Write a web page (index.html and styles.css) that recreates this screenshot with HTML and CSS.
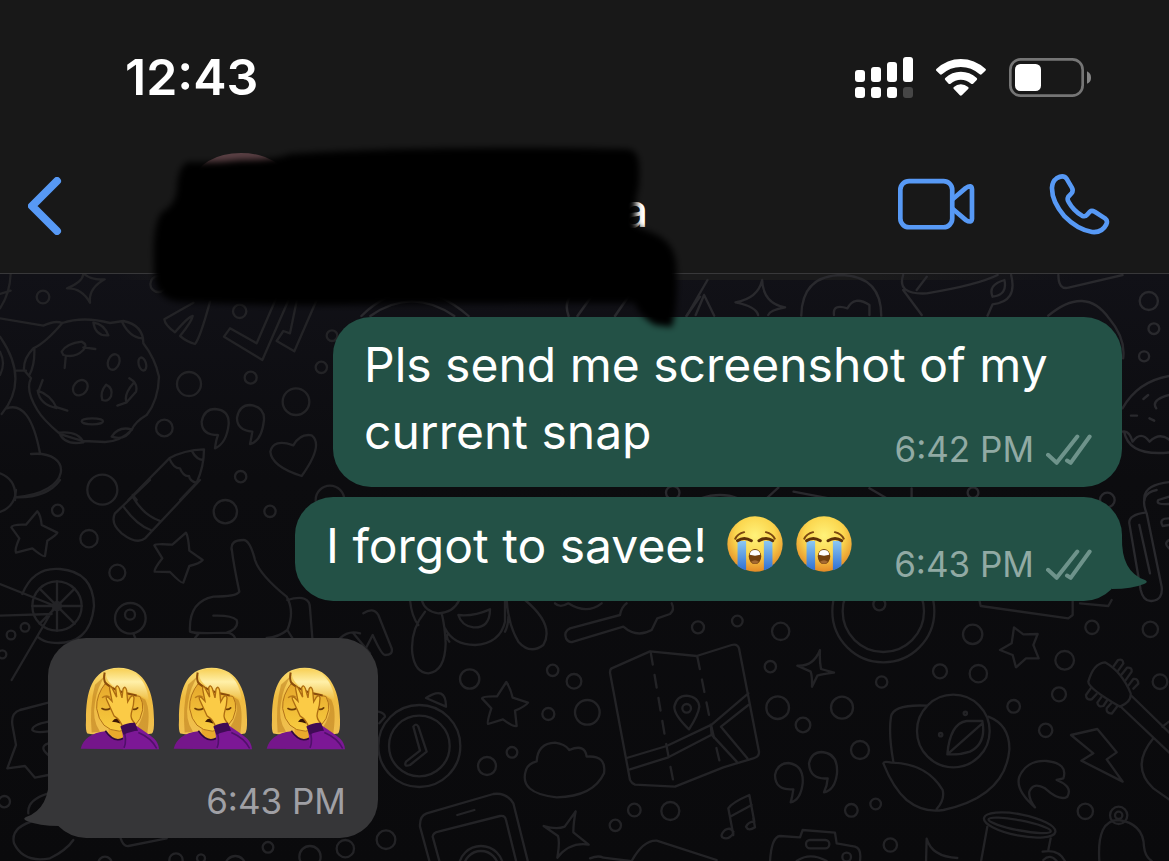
FILE: index.html
```html
<!DOCTYPE html>
<html lang="en">
<head>
<meta charset="utf-8">
<meta name="viewport" content="width=device-width, initial-scale=1">
<title>Chat</title>
<link rel="stylesheet" href="styles.css">
</head>
<body>
<svg class="defs" aria-hidden="true">
  <defs>
    <radialGradient id="face" cx=".5" cy=".35" r=".65"><stop offset="0" stop-color="#fff27a"/><stop offset=".55" stop-color="#fbd64e"/><stop offset="1" stop-color="#e48a26"/></radialGradient>
    <linearGradient id="tear" x1="0" y1="0" x2="0" y2="1"><stop offset="0" stop-color="#8cc8f2"/><stop offset="1" stop-color="#2f70d2"/></linearGradient>
    <linearGradient id="hair" x1="0" y1="0" x2="0" y2="1"><stop offset="0" stop-color="#fbdc70"/><stop offset=".45" stop-color="#efbb40"/><stop offset="1" stop-color="#f0c050"/></linearGradient>
    <linearGradient id="shine" x1="0" y1="0" x2="0" y2="1"><stop offset="0" stop-color="#f7cf55"/><stop offset=".4" stop-color="#fff0a8"/><stop offset="1" stop-color="#edb93c"/></linearGradient>
    <linearGradient id="skin" x1="0" y1="0" x2="0" y2="1"><stop offset="0" stop-color="#e5a62b"/><stop offset="1" stop-color="#f9cd40"/></linearGradient>
    <symbol id="sob" viewBox="77 81 170 170">
      <circle cx="162" cy="166" r="84" fill="url(#face)"/>
      <path d="M109 157h26v89q-14-4-26-13zM189 157h26v76q-12 9-26 13z" fill="url(#tear)"/>
      <path d="M102 150q7-15 27-20M222 150q-7-15-27-20" fill="none" stroke="#7a4712" stroke-width="6" stroke-linecap="round"/>
      <path d="M109 156q20-14 42 0M174 156q22-14 42 0" fill="none" stroke="#5e3208" stroke-width="9" stroke-linecap="round"/>
      <ellipse cx="162" cy="204" rx="19" ry="23" fill="#75420f"/>
      <path d="M146 199q1-15 16-15t16 15q-16 5-32 0z" fill="#fff"/>
      <path d="M150 220q12-10 24 0-12 12-24 0z" fill="#a56a32"/>
    </symbol>
    <symbol id="facepalm" viewBox="240 112 240 248">
      <path d="M262 311Q256 304 258 270C258 190 274 114 356 114C440 114 462 195 462 270Q463 305 456 311Q410 320 360 311Q310 320 262 311z" fill="url(#hair)"/>
      <path d="M318 135Q292 170 285 218Q275 270 300 306L275 308Q268 230 285 165zM410 195Q430 210 432 240Q425 280 400 306L442 310Q452 240 436 210z" fill="#b06f14" opacity=".45"/>
      <path d="M326 285h64v40q-30 22-64-4z" fill="#e9a92c"/>
      <path d="M318 158Q288 195 290 236Q300 302 358 304Q418 300 428 240Q430 218 420 200Q350 190 318 158z" fill="url(#skin)" stroke="#b3731a" stroke-width="3"/>
      <path d="M317 126Q318 166 370 186Q425 190 447 216Q440 145 390 122Q350 108 317 126z" fill="url(#shine)"/>
      <path d="M314 128Q309 151 318 162Q345 186 410 197" fill="none" stroke="#8a4d0c" stroke-width="6"/>
      <path d="M242 357Q252 312 316 304Q345 344 375 322L376 358z" fill="#75168b"/>
      <path d="M316 303Q342 341 370 325" fill="none" stroke="#30083f" stroke-width="5"/>
      <path d="M306 236q12 7 26-1M395 237q10 5 18-3" fill="none" stroke="#6b3c08" stroke-width="5" stroke-linecap="round"/>
      <path d="M306 204q12-10 23-2" fill="none" stroke="#b97a1a" stroke-width="4"/>
      <path d="M336 276q12-18 27-3l-3 8q-12-5-24-5z" fill="#3b1805"/>
      <path d="M342 258L320 210Q315 196 326 204L336 214L329 178Q328 165 336 174L350 202L347 174Q352 161 358 176L366 204L369 178Q376 165 380 182L383 216L391 202Q401 192 402 205Q402 225 394 250Q390 266 404 280L368 293Q362 270 342 258z" fill="#fbcb46" stroke="#ad6c12" stroke-width="4"/>
      <path d="M370 358Q372 330 366 298L404 285Q445 312 462 326Q476 340 477 358z" fill="#7c1896"/>
      <path d="M372 354Q382 330 370 300M415 308Q455 325 470 356" fill="none" stroke="#50106a" stroke-width="5"/>
      <path d="M361 290Q384 277 405 279L414 303Q395 304 370 315z" fill="#3f0b55"/>
    </symbol>
    <symbol id="ticks" viewBox="1039 173 138 92">
      <path d="M1045 235l26 24 62-79M1102 252l11 7 57-79" fill="none" stroke="currentColor" stroke-width="12" stroke-linecap="round" stroke-linejoin="round"/>
    </symbol>
    <filter id="soft" x="-5%" y="-10%" width="110%" height="120%"><feGaussianBlur stdDeviation="3"/></filter>
  </defs>
</svg>

<header class="header">
  <div class="status">
    <time class="clock">12:43</time>
    <div class="indicators">
      <svg class="signal" viewBox="78 51 174 123" role="img" aria-label="Signal"><g fill="#fff"><rect x="78" y="90" width="30" height="36" rx="9"/><rect x="126" y="81" width="30" height="45" rx="9"/><rect x="174" y="66" width="30" height="60" rx="9"/><rect x="222" y="51" width="30" height="75" rx="9"/><rect x="78" y="141" width="30" height="33" rx="9"/><rect x="126" y="141" width="30" height="33" rx="9"/><rect x="174" y="141" width="30" height="33" rx="9"/></g><rect x="222" y="141" width="30" height="33" rx="9" fill="#464646"/></svg>
      <svg class="wifi" viewBox="319 57 151 111" role="img" aria-label="Wi-Fi"><g fill="#fff"><path d="M320 87Q353 57 394 57T469 87Q471 90 468 92L457 103Q454 105 451 103Q426 81 394 81T337 103Q334 105 331 103L320 92Q318 90 320 87z"/><path d="M347 114Q367 95 394 95T442 114Q445 117 442 120L431 131Q428 133 425 131Q411 119 394 119T363 131Q360 133 357 131L347 120Q344 117 347 114z"/><path d="M373 141Q382 133 394 133T416 141Q419 144 416 147L397 166Q394 169 391 166L373 147Q370 144 373 141z"/></g></svg>
      <svg class="battery" viewBox="537 54 246 117" role="img" aria-label="Battery"><rect x="541" y="58" width="217" height="109" rx="31" fill="none" stroke="#757575" stroke-width="8"/><rect x="555" y="72" width="78" height="81" rx="16" fill="#fff"/><path d="M771 94Q783 100 783 113T771 131z" fill="#858585"/></svg>
    </div>
  </div>
  <nav class="nav">
    <button class="icon-button" aria-label="Back"><svg class="back" viewBox="0 0 34 58"><path d="M29 4L4 29L29 54" fill="none" stroke="currentColor" stroke-width="8" stroke-linecap="round" stroke-linejoin="round"/></svg></button>
    <div class="contact"><span class="name">a</span></div>
    <div class="calls">
      <button class="icon-button" aria-label="Video call"><svg class="video" viewBox="205 415 230 155"><g fill="none" stroke="currentColor" stroke-width="14" stroke-linejoin="round"><rect x="212" y="424" width="155" height="138" rx="26"/><path d="M367 479L407 445Q425 433 426 448V537Q425 551 407 540L367 506"/></g></svg></button>
      <button class="icon-button" aria-label="Voice call"><svg class="phone" viewBox="658 400 184 184"><path d="M681 413Q701 401 711 414L727 441Q732 451 726 458L716 469Q712 476 717 484Q732 511 758 526Q767 530 773 523L781 514Q787 509 796 514L827 534Q836 541 831 552Q818 578 788 575Q744 568 705 528Q666 483 667 441Q668 422 681 413z" fill="none" stroke="currentColor" stroke-width="14" stroke-linejoin="round"/></svg></button>
    </div>
  </nav>
  <svg class="scribble" viewBox="0 0 700 340" aria-hidden="true">
    <ellipse cx="241" cy="180" rx="46" ry="27" fill="#5a4044"/>
    <path filter="url(#soft)" d="M188 162Q178 166 177 188Q176 205 162 212Q152 225 154 265Q152 300 180 302Q300 307 390 304L634 303Q642 318 655 325L672 327Q679 300 676 262Q673 240 650 232L636 226V196Q640 190 639 165Q638 149 626 149Q430 145 290 154Q275 160 240 160Q215 163 188 162z"/>
  </svg>
</header>

<main class="chat">
  <svg class="doodles" viewBox="0 274 1169 587" preserveAspectRatio="xMinYMin slice" aria-hidden="true">
    <g transform="translate(0 270) scale(.33333)">
      <!-- cookie -->
      <path d="M0 145L130 167Q165 150 187 159Q250 138 330 159L370 153Q430 165 430 220Q465 265 477 320Q475 390 440 435Q405 455 395 480Q360 515 315 516L250 513Q200 500 178 490Q130 450 112 420Q75 360 93 325L72 300Q70 265 100 235Q135 220 187 159M103 235Q105 285 88 315M185 245Q200 220 245 215Q265 225 250 240Q225 265 190 255zM250 232l36 5M197 262l-3 32M280 158q32 4 45 38q-38 4-45-38zM366 155q22 46 60 50M113 362Q153 375 170 414Q120 405 113 362zM165 410l37 12M128 330l-12 32M388 325Q415 340 408 365L380 397Q370 375 400 340M380 397l-28 10M178 488q58-5 72 29q-58 10-72-29zM335 500q20-32 60-22q-20 35-60 22z"/>
      <ellipse cx="341" cy="276" rx="17" ry="24" transform="rotate(20 341 276)"/><ellipse cx="427" cy="282" rx="11" ry="20" transform="rotate(-15 427 282)"/><ellipse cx="241" cy="353" rx="20" ry="25" transform="rotate(40 241 353)"/><path d="M318 344q22 10 15 35-9 18-26 11-8-23 11-46z"/><ellipse cx="277" cy="454" rx="32" ry="9"/>
      <path d="M250 10Q250 35 201 55Q245 53 270 98Q265 55 314 28Q275 32 250 10zM32 10Q30 70 0 115M32 62L0 72M0 200Q90 330 5 432M50 302h28M0 245q18 35 0 70M20 415Q90 390 120 550M93 552C220 540 220 670 45 682M0 610Q52 630 45 690"/>
      <path d="M580 98L493 148Q495 165 525 187Q565 140 578 138Q575 155 540 198Q560 215 585 222Q600 205 630 95M835 70L770 220L690 175L672 200L787 270L870 80M895 70L870 190L850 183L830 213L883 244L950 90"/>
      <path d="M645 535Q648 510 654 495Q605 495 605 455Q612 417 645 417Q688 420 686 462Q680 520 645 535zM750 522Q755 500 757 485Q710 480 711 443Q718 405 750 405Q794 410 792 450Q785 515 750 522zM905 618Q815 590 811 545Q820 505 880 526Q900 490 935 496Q972 525 905 618z"/>
      <path d="M508 565Q550 540 612 538Q612 590 590 638L540 690M385 690L508 565Q520 595 540 595Q550 620 567 618Q570 635 590 638M575 542Q590 570 610 570M398 675l12 15"/>
      <circle cx="129" cy="81" r="19"/><circle cx="719" cy="124" r="20"/><circle cx="567" cy="342" r="36"/><circle cx="752" cy="323" r="18"/><circle cx="964" cy="292" r="17"/><circle cx="888" cy="395" r="40"/><circle cx="493" cy="474" r="25"/><circle cx="722" cy="620" r="17"/><circle cx="307" cy="659" r="45"/><circle cx="996" cy="197" r="16"/><circle cx="990" cy="690" r="43"/><circle cx="475" cy="42" r="24"/>
    </g>
    <g transform="translate(0 480) scale(.33333)">
      <path d="M450 0L345 100Q330 130 365 160Q410 195 435 175L600 0M398 50Q430 105 478 122M372 82Q410 135 452 150M45 52Q140 55 180 0M0 96Q45 80 48 30"/>
      <path d="M112 94Q122 105 125 135L172 158Q170 165 142 182L135 228Q130 232 97 205L48 218Q43 210 58 175L34 142Q37 132 78 134zM558 158Q565 170 568 212L608 240Q600 250 568 258L550 308Q545 312 510 276L464 275Q462 267 487 235L463 196Q465 190 517 194z"/>
      <circle cx="171" cy="378" r="74"/><circle cx="171" cy="378" r="12"/>
      <path d="M67 342Q100 260 180 267Q280 275 282 378Q270 500 155 488Q130 485 115 472M171 304V452M97 378H245M119 326L224 431M224 326L119 431M0 312L165 378L35 600M0 407L155 402"/>
      <path d="M695 210Q690 180 730 180Q750 180 765 240Q780 285 860 350Q885 395 862 450Q835 472 800 474M695 205Q700 250 718 335Q710 350 640 350Q565 365 570 455Q585 462 680 458Q718 445 710 420Q695 405 640 407M680 458Q700 460 705 474M570 455L595 462L585 474M862 360Q930 340 930 385L937 474M862 450l15 24"/>
      <circle cx="173" cy="91" r="17"/><circle cx="267" cy="176" r="26"/><circle cx="352" cy="278" r="24"/><circle cx="676" cy="95" r="35"/><circle cx="810" cy="94" r="17"/><circle cx="391" cy="415" r="46"/><circle cx="390" cy="404" r="15"/><circle cx="75" cy="442" r="13"/><circle cx="33" cy="465" r="13"/><circle cx="7" cy="523" r="12"/><path d="M400 460l8 20"/>
    </g>
    <g transform="translate(0 630) scale(.33333)">
      <path d="M145 218L60 240Q30 250 38 290L48 345L22 415L75 408L105 443L145 435M145 275Q95 285 97 300Q105 310 145 304M145 340Q115 350 145 375M145 490Q80 510 85 550M110 570Q30 590 42 640Q70 700 150 685Q200 660 220 630M362 625Q370 650 385 648L500 625M1020 25Q1045 0 1080 10M1060 10L1110 70"/>
      <circle cx="13" cy="515" r="17"/><circle cx="804" cy="652" r="16"/><circle cx="1036" cy="656" r="26"/><circle cx="528" cy="690" r="20"/><circle cx="603" cy="685" r="12"/><circle cx="706" cy="708" r="30"/><circle cx="930" cy="680" r="32"/><circle cx="315" cy="700" r="20"/>
    </g>
    <g transform="translate(370 600) scale(.33333)">
      <path d="M-20 40Q10 20 25 45L65 145Q70 165 45 165Q35 165 8 105L-15 150"/>
      <path d="M120 0Q125 50 145 75M165 35Q120 90 127 160Q135 218 175 220Q225 215 227 130Q225 80 215 40M155 0Q165 35 205 40Q250 38 268 0M225 85Q250 135 315 135Q390 130 405 65V0M238 125Q225 110 235 100M410 0Q415 75 445 125Q480 165 520 135Q555 75 465 0M405 95Q415 75 415 50M265 45Q310 50 360 28Q360 85 310 82Q275 78 265 45z"/>
      <path d="M750 45L600 85Q580 95 588 115Q597 130 610 125L760 80Q800 115 845 90L862 55L900 42Q915 30 905 10M750 45Q755 20 770 10M555 10Q570 25 595 10Q650 45 695 10"/>
      <path d="M409 246Q422 265 428 293L474 308Q465 320 435 332L440 378Q430 382 399 358L354 372Q350 368 364 325L336 295Q338 288 381 289zM617 634Q610 670 610 697L656 734Q600 725 562 773Q570 725 564 708L521 678Q560 690 584 680z"/>
      <circle cx="148" cy="438" r="123"/><circle cx="148" cy="438" r="91"/>
      <path d="M130 380Q138 368 145 380L170 455L120 495Q100 502 108 485L150 452zM168 294Q228 255 228 320zM25 335Q45 340 45 350L28 370M468 510Q475 490 500 484Q503 430 555 428Q585 432 598 450Q645 430 650 470Q710 465 702 520Q670 590 560 592Q445 580 468 510z"/>
      <path d="M180 790L150 680Q148 648 170 640L370 582Q410 577 430 610L475 790M210 790L188 710Q190 698 205 695L390 648Q405 645 408 660L440 790M262 645L313 630"/><circle cx="333" cy="805" r="67"/><circle cx="333" cy="805" r="52"/>
      <path d="M725 205L840 154L980 168L1085 135Q1102 130 1107 145L1167 455Q1168 470 1150 475L1060 502L915 560L795 554Q785 550 780 540L720 218Q720 208 725 205zM770 474L890 438L1025 374L1135 280M780 508L895 472L1025 404M1022 374L1025 404L1100 485M1053 380L1132 475M1053 380L1135 315M957 388Q912 345 913 320Q920 287 950 287Q985 290 988 320Q985 345 957 388z"/><path d="M842 156L890 440L912 555M982 170L1022 370L1050 490" stroke-dasharray="38 32"/><circle cx="950" cy="325" r="13"/>
      <path d="M1090 705L1075 625Q1085 608 1138 585L1153 665M1080 650L1145 615M1090 695Q1080 680 1065 690Q1050 705 1057 712Q1075 722 1090 700M1153 665Q1135 665 1128 680Q1135 695 1155 682L1150 655M660 775Q685 765 700 773L780 783M785 783Q820 720 860 722L1040 780"/>
      <circle cx="299" cy="237" r="29"/><circle cx="548" cy="211" r="17"/><circle cx="612" cy="244" r="22"/><circle cx="535" cy="342" r="18"/><circle cx="652" cy="337" r="37"/><circle cx="426" cy="457" r="16"/><circle cx="351" cy="498" r="27"/><circle cx="48" cy="719" r="28"/><circle cx="793" cy="630" r="19"/><circle cx="736" cy="676" r="17"/><circle cx="901" cy="633" r="27"/><circle cx="984" cy="82" r="18"/><circle cx="1102" cy="63" r="16"/>
    </g>
    <g transform="translate(760 600) scale(.33333)">
      <circle cx="370" cy="34" r="153"/><circle cx="370" cy="34" r="122"/><circle cx="358" cy="13" r="18"/>
      <path d="M180 150Q178 180 183 207L222 218Q185 222 172 227L156 260Q157 230 152 215L112 197Q160 200 180 150zM762 82L790 103L833 102L820 135L836 175L798 175L768 202L758 165L720 150L755 130zM500 716Q515 770 592 774M500 716L498 790"/>
      <path d="M658 0L662 18L925 55L938 45V0M960 10L1045 18L1055 0"/>
      <circle cx="580" cy="393" r="109"/><circle cx="542" cy="404" r="5"/><circle cx="616" cy="340" r="5"/>
      <path d="M500 317Q400 312 393 350Q385 400 400 485M562 463Q570 370 620 363H667Q680 430 630 455Q600 465 562 463L667 370M685 350Q750 375 748 450Q735 590 550 630Q490 640 440 600Q400 565 370 490Q372 482 395 488Q500 490 548 570Q555 600 530 627"/>
      <path d="M92 607Q97 590 100 568Q45 572 45 525Q52 490 85 489Q132 495 128 550Q122 600 92 607zM192 577Q202 555 203 535Q150 540 147 490Q155 456 185 456Q235 460 231 520Q225 570 192 577zM825 622Q765 570 778 530Q800 480 860 483Q925 490 910 535L890 540Q940 560 922 590Q900 605 855 565Q820 545 808 575Q805 595 825 622z"/>
      <path d="M933 405L1012 387L1070 457L1040 478L1088 545L964 482L1000 460zM1035 187Q1000 190 985 245Q985 265 1080 320Q1115 305 1112 280Q1085 215 1035 187zM1112 285L1230 400M1080 318L1230 460M1180 415Q1110 500 1180 565L1230 600M1207 380l20-15"/>
      <path d="M1060 200l14-20q15-5 16 10l-17 24M1083 226l18-23q16-2 14 12l-19 27M1105 257l15-20q15-2 15 14l-15 15M992 265l-14 20q0 16 17 13l15-16M1025 290l-13 18q2 15 18 10l12-18M1055 308l-15 17q-2 15 15 16l17-22"/>
      <ellipse cx="779" cy="675" rx="109" ry="32" transform="rotate(11 779 675)"/><ellipse cx="779" cy="676" rx="95" ry="15" transform="rotate(11 779 676)"/>
      <path d="M682 680L662 790M872 715L865 750M848 755Q900 745 918 790M850 780Q870 760 890 783M1018 783Q1010 660 1075 660Q1150 670 1152 740Q1155 770 1175 783"/><circle cx="1076" cy="646" r="26"/><circle cx="1076" cy="646" r="11"/>
      <path d="M30 783Q35 710 60 708L120 712L128 690L225 698L230 730L285 740Q305 745 300 783M110 783Q150 755 200 783"/><rect x="138" y="720" width="70" height="25" rx="12"/><circle cx="260" cy="771" r="13"/>
      <circle cx="62" cy="94" r="26"/><circle cx="31" cy="200" r="17"/><circle cx="53" cy="323" r="34"/><circle cx="246" cy="323" r="33"/><circle cx="129" cy="375" r="22"/><circle cx="300" cy="450" r="27"/><circle cx="365" cy="246" r="17"/><circle cx="540" cy="214" r="21"/><circle cx="655" cy="221" r="26"/><circle cx="638" cy="103" r="29"/><circle cx="761" cy="319" r="19"/><circle cx="897" cy="283" r="21"/><circle cx="914" cy="181" r="28"/><circle cx="996" cy="82" r="20"/><circle cx="1171" cy="88" r="23"/><circle cx="1200" cy="245" r="22"/><circle cx="857" cy="391" r="20"/><circle cx="274" cy="631" r="19"/><circle cx="347" cy="612" r="16"/><circle cx="391" cy="735" r="20"/><circle cx="976" cy="634" r="23"/>
    </g>
    <g class="near" transform="translate(700 490) scale(.33333)">
      <circle cx="1222" cy="30" r="22"/><path d="M1370 0Q1315 10 1340 70L1385 290Q1390 330 1355 333Q1330 335 1322 300L1288 100Q1285 75 1335 68M1318 105L1350 250M1407 20L1375 30Q1365 45 1407 42M1407 85Q1375 85 1388 108L1407 105M1407 150Q1390 160 1407 175"/>
    </g>
    <g class="near" transform="translate(640 265) scale(.3374 .33333)">
      <path d="M200 45L140 150M190 90L165 150M190 90L220 152M362 45Q350 100 283 112Q345 125 350 150M362 45Q365 115 430 127Q385 135 380 150M478 152Q480 30 600 30Q715 35 715 152M575 150Q570 115 615 130Q635 90 680 120L680 150M780 30Q760 90 850 85Q1000 60 1060 30M780 75L835 150M820 75L850 35M1100 30Q1120 110 1045 118L1030 152M1045 95Q1030 60 1080 45Q1090 90 1045 95M1240 30Q1240 75 1270 68L1430 30M1210 152Q1320 60 1390 160Q1440 220 1432 280"/>
      <path d="M1430 430Q1480 340 1590 330M1430 500Q1450 495 1460 530Q1485 495 1510 530Q1540 500 1570 525M1435 500Q1450 580 1587 560M1530 430Q1510 400 1590 385M1492 402l14-12M1455 452h18M1510 460l14 7M1587 650Q1490 655 1495 705"/>
      <circle cx="1508" cy="108" r="27"/><circle cx="1523" cy="191" r="16"/><circle cx="1494" cy="274" r="15"/><circle cx="97" cy="683" r="20"/><circle cx="987" cy="683" r="16"/><path d="M370 705L410 668M455 680L560 700M680 670L740 705M805 670v35M180 700Q240 680 290 700"/>
    </g>
    <g class="near" transform="translate(140 140) scale(.35714 .33333)"><path d="M620 528Q760 380 920 528M645 528Q760 440 880 528M1200 528Q1180 470 1240 440M1225 528L1290 430M1330 528L1380 450M1530 528L1568 470"/></g>
  </svg>

  <div class="bubble sent">
    <p class="text">Pls send me screenshot of my current snap <span class="meta inline-meta"><time>6:42 PM</time><svg class="ticks" role="img" aria-label="Delivered"><use href="#ticks"/></svg></span></p>
  </div>

  <div class="bubble sent row">
    <p class="text">I forgot to savee!</p>
    <span class="emojis" role="img" aria-label="Loudly crying face, twice"><svg class="sob"><use href="#sob"/></svg><svg class="sob"><use href="#sob"/></svg></span>
    <span class="meta"><time>6:43 PM</time><svg class="ticks" role="img" aria-label="Delivered"><use href="#ticks"/></svg></span>
    <svg class="tail tail-right" viewBox="0 0 37 64" aria-hidden="true"><path d="M0 0H10Q9 35 33 43Q37 45 32 47Q20 52 0 52z"/></svg>
  </div>

  <div class="bubble received">
    <span class="emojis" role="img" aria-label="Woman facepalming, three times"><svg class="facepalm"><use href="#facepalm"/></svg><svg class="facepalm"><use href="#facepalm"/></svg><svg class="facepalm"><use href="#facepalm"/></svg></span>
    <span class="meta"><time>6:43 PM</time></span>
    <svg class="tail tail-left" viewBox="0 0 37 64" aria-hidden="true"><path d="M37 0H27Q28 35 4 43Q0 45 5 47Q17 52 37 52z"/></svg>
  </div>
</main>
</body>
</html>
```
FILE: styles.css
```css
* { box-sizing: border-box; }

body {
  margin: 0;
  min-height: 100vh;
  display: flex;
  flex-direction: column;
  background: #0b0b0d;
  color: #fff;
  font-family: Inter, "Liberation Sans", sans-serif;
  overflow: hidden;
}

svg { display: block; flex: none; }
.defs { position: absolute; width: 0; height: 0; }

.header {
  position: relative;
  z-index: 2;
  background: #181818;
  border-bottom: 1px solid #38383a;
  padding-top: 47px;
}

.status {
  display: flex;
  align-items: center;
  justify-content: space-between;
  height: 60px;
  padding: 0 78px 0 125px;
}

.clock { font-size: 50px; line-height: 60px; font-weight: 600; }
.indicators { display: flex; align-items: center; gap: 23px; }
.signal { width: 58px; height: 41px; }
.wifi { width: 50px; height: 37px; }
.battery { width: 82px; height: 39px; }

.nav {
  display: flex;
  align-items: center;
  height: 166px;
  padding: 28px 59px 0 28px;
}

.icon-button {
  padding: 0;
  border: 0;
  background: none;
  color: #5799f5;
}

.back { width: 34px; height: 58px; margin-top: 4px; }
.video { width: 77px; height: 52px; }
.phone { width: 61px; height: 61px; }
.contact { flex: 1; padding: 12px 0 0 560px; }
.name { font-size: 46px; line-height: 56px; font-weight: 500; }
.calls { display: flex; align-items: center; gap: 74px; }

.scribble {
  position: absolute;
  top: 0;
  left: 0;
  width: 700px;
  height: 340px;
  pointer-events: none;
}

.chat {
  position: relative;
  flex: 1;
  display: flex;
  flex-direction: column;
  gap: 10px;
  padding: 43px 47px 23px 48px;
  background: linear-gradient(#111117, #0c0c0f 35%, #0a0a0c);
}

/* Soft edge where the header meets the wallpaper */
.chat::before {
  content: "";
  position: absolute;
  inset: 0 0 auto;
  height: 6px;
  background: linear-gradient(90deg, transparent 10%, #1a1a1b 16%, #1a1a1b 75%, transparent 92%);
}

.doodles {
  position: absolute;
  inset: 0;
  width: 100%;
  height: 100%;
  fill: none;
  stroke: #232326;
  stroke-width: 7;
  stroke-linecap: round;
  stroke-linejoin: round;
}

.near { stroke: #29292d; }

.bubble {
  position: relative;
  width: fit-content;
  max-width: 789px;
  border-radius: 38px;
}

.sent { align-self: flex-end; background: #235146; color: #fff; padding: 14px 30px 22px 31px; }
.received { align-self: flex-start; background: #363638; }

.text { margin: 0; font-size: 48px; line-height: 67px; }

.row {
  max-width: none;
  display: flex;
  align-items: center;
  padding: 15px 30px 22px 31px;
}

.meta {
  display: flex;
  align-items: center;
  gap: 12px;
  font-size: 35px;
  line-height: 42px;
  color: #91aaa4;
  white-space: nowrap;
}

.inline-meta { float: right; padding-top: 30px; margin-bottom: -5px; }
.row .meta { align-self: flex-end; margin-left: 42px; margin-bottom: -6px; }
.ticks { width: 46px; height: 31px; color: #6e938b; }

.emojis { display: flex; gap: 13px; }
.row .emojis { margin: 0 0 4px 20px; }
.sob { width: 56px; height: 56px; }
.facepalm { width: 80px; height: 83px; }

.received {
  display: flex;
  flex-direction: column;
  gap: 30px;
  margin-top: 27px;
  padding: 29px 32px 16px;
}

.received .meta { align-self: flex-end; color: #a0a0a5; }

.tail { position: absolute; bottom: 0; width: 37px; height: 64px; }
.tail-right { right: -27px; fill: #235146; }
.tail-left { left: -26px; fill: #363638; }
```
